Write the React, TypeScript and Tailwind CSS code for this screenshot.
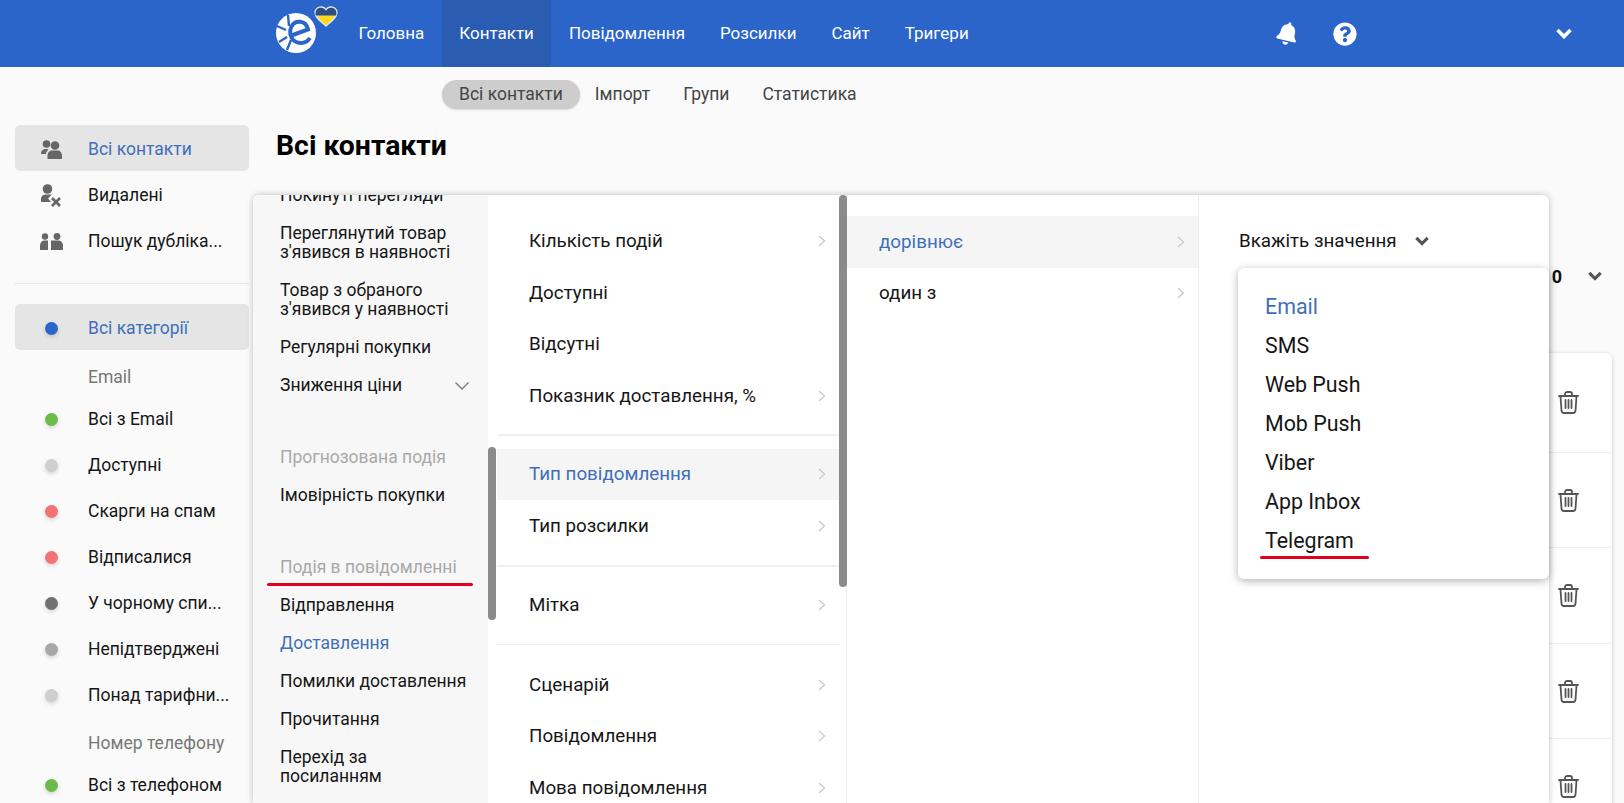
import React from "react";
import { FaBell, FaQuestionCircle } from "react-icons/fa";

const topNav = ["Головна", "Контакти", "Повідомлення", "Розсилки", "Сайт", "Тригери"];
const subNav = ["Імпорт", "Групи", "Статистика"];

const emailRows = [
  { label: "Всі з Email", dot: "bg-[#6bbb4b]" },
  { label: "Доступні", dot: "bg-[#cfcfcf]" },
  { label: "Скарги на спам", dot: "bg-[#f47174]" },
  { label: "Відписалися", dot: "bg-[#f47174]" },
  { label: "У чорному спи...", dot: "bg-[#707070]" },
  { label: "Непідтверджені", dot: "bg-[#a8a8a8]" },
  { label: "Понад тарифни...", dot: "bg-[#cfcfcf]" },
];

const channels = ["SMS", "Web Push", "Mob Push", "Viber", "App Inbox", "Telegram"];

const Logo = () => (
  <svg width="62" height="48" viewBox="0 0 62 48" className="shrink-0">
    <circle cx="20" cy="27" r="20" fill="#fff" />
    <path d="M1 20 L10 24 M3 36 L11 31 M12 9 L13 20 M11 44 L15 34" stroke="#2b65c9" strokeWidth="2.400" />
    <path d="M14 30 L32 23.500 C30 14 19 13.500 15.500 20.500 C12 28 16 37 25 37 C29 37 32 35 34 32" fill="none" stroke="#2b65c9" strokeWidth="4" />
    <path d="M50 20 C44 15 39 11 39 6.500 C39 3 42 1 45 1 C47 1 49 2 50 4 C51 2 53 1 55 1 C58 1 61 3 61 6.500 C61 11 56 15 50 20 Z" fill="#ffd91a" stroke="#dfe6f2" strokeWidth="1.400" />
    <path d="M39.700 9.500 C39.100 8.500 39.700 6.500 39.700 6.500 C39.700 3.500 42 1.700 45 1.700 C47 1.700 49 2.700 50 4.700 C51 2.700 53 1.700 55 1.700 C58 1.700 60.300 3.500 60.300 6.500 C60.300 7.500 60.500 8.500 60.300 9.500 Z" fill="#2d4f86" />
  </svg>
);

const UsersIcon = () => (
  <svg width="21" height="19" viewBox="0 0 21 19" fill="#666">
    <circle cx="5.500" cy="4" r="3.800" />
    <circle cx="14" cy="5.500" r="4.300" />
    <path d="M0 14 C0 10.500 2 9 5 9 C6 9 7 9.300 7.500 9.800 C6 11 5 12.500 5 14 Z" />
    <path d="M6.500 19 L6.500 15.500 C6.500 12.500 9 10.500 11 10.500 L17 10.500 C19 10.500 21 12.500 21 15.500 L21 19 Z" />
  </svg>
);

const UserRemovedIcon = () => (
  <svg width="21" height="23" viewBox="0 0 21 23" fill="#666">
    <circle cx="6.500" cy="5" r="4.800" />
    <path d="M0 18 L0 15 C0 12 2 10.500 5 10.500 L11 10.500 L7 14.500 L10 18 Z" />
    <path d="M11 14 L19 22 M19 14 L11 22" stroke="#666" strokeWidth="2.600" fill="none" />
  </svg>
);

const DuplicateIcon = () => (
  <svg width="23" height="17" viewBox="0 0 23 17" fill="#666">
    <circle cx="5" cy="3.500" r="3.200" />
    <circle cx="17" cy="3.500" r="3.400" />
    <path d="M0 17 L0 12.500 C0 9.500 2 7.500 4.500 7.500 L8 7.500 L8 17 Z" />
    <path d="M11 17 L11 7.500 L18.500 7.500 C21 7.500 23 9.500 23 12.500 L23 17 Z" />
  </svg>
);

const TrashIcon = () => (
  <svg width="21" height="23" viewBox="0 0 21 23" fill="none" stroke="#555" strokeWidth="1.800" strokeLinecap="round">
    <path d="M1 5 L20 5" />
    <path d="M7 4.500 L7 3 C7 1.800 8 1 9 1 L12 1 C13 1 14 1.800 14 3 L14 4.500" />
    <path d="M2.500 5.500 L3.500 19.500 C3.600 21 4.500 22 6 22 L15 22 C16.500 22 17.400 21 17.500 19.500 L18.500 5.500" />
    <path d="M7.500 9 L7.500 17 M10.500 9 L10.500 17 M13.500 9 L13.500 17" />
  </svg>
);

const BoldChevron = ({ color, size }: { color: string; size: number }) => (
  <svg width={size} height={size * 0.7} viewBox="0 0 16 11" fill="none" stroke={color} strokeWidth="3.600" className="shrink-0">
    <path d="M1.500 2 L8 8.500 L14.500 2" />
  </svg>
);

const Arrow = () => (
  <svg width="8" height="12" viewBox="0 0 8 12" fill="none" stroke="#c9c9c9" strokeWidth="1.300" className="shrink-0">
    <path d="M1 1 L6.500 6 L1 11" />
  </svg>
);

const MenuRow = ({ label, active, arrow = true }: { label: string; active?: boolean; arrow?: boolean }) => (
  <div className={`h-[51.5px] flex items-center justify-between pl-[32px] pr-[13px] ${active ? "bg-[#f5f5f5] text-[#3f6fb8]" : "text-[#161616]"}`}>
    <span>{label}</span>
    {arrow && <Arrow />}
  </div>
);

const Ev = ({ label, muted, blue }: { label: string; muted?: boolean; blue?: boolean }) => (
  <div className={`h-[38px] flex items-center pl-[27px] ${muted ? "text-[#a9a9a9]" : blue ? "text-[#3f6fb8]" : "text-[#161616]"}`}>{label}</div>
);

const Ev2 = ({ a, b }: { a: string; b: string }) => (
  <div className="h-[57px] flex flex-col justify-center pl-[27px] leading-[19px] text-[#161616]">
    <span>{a}</span>
    <span>{b}</span>
  </div>
);

const SideRow = ({ label, icon, active }: { label: string; icon: React.ReactNode; active?: boolean }) => (
  <div className={`h-[46px] pt-[2px] flex items-center rounded-[5px] ${active ? "bg-[#e5e5e5] text-[#3f6fb8]" : "text-[#161616]"}`}>
    <div className="w-[73px] flex justify-center">{icon}</div>
    <span>{label}</span>
  </div>
);

const Dot = ({ color }: { color: string }) => (
  <span className={`block w-[13px] h-[13px] rounded-full shadow-[0_2px_4px_rgba(0,0,0,0.15)] ${color}`} />
);

export default function App() {
  return (
    <div className="relative w-[1624px] h-[803px] overflow-hidden bg-[#fafafa] font-['Roboto',sans-serif] text-[17.5px]">
      <header className="h-[67px] bg-[#2b65c9] flex items-stretch pl-[276px] text-white text-[17px]">
        <div className="w-[65px] flex items-start pt-[6px]">
          <Logo />
        </div>
        {topNav.map((item) => (
          <div key={item} className={`flex items-center px-[17.5px] ${item === "Контакти" ? "bg-[#2a5cb2]" : ""}`}>
            {item}
          </div>
        ))}
        <div className="ml-[290px] flex items-center">
          <FaBell className="w-[23px] h-[23px] rotate-[14deg] text-white" />
          <FaQuestionCircle className="ml-[34px] w-[24px] h-[24px] text-white" />
          <div className="ml-[199px]">
            <BoldChevron color="#fff" size={16} />
          </div>
        </div>
      </header>

      <nav className="flex items-center pl-[442px] h-[29px] mt-[13px] text-[#444]">
        <div className="h-[29px] flex items-center px-[17px] rounded-full bg-[#cdcdcd] shadow-[0_1px_2px_rgba(0,0,0,0.15)]">Всі контакти</div>
        <div className="flex gap-[33px] ml-[15px]">
          {subNav.map((s) => (
            <span key={s}>{s}</span>
          ))}
        </div>
      </nav>

      <div className="flex mt-[16px]">
        <aside className="w-[249px] ml-[15px] shrink-0">
          <div className="w-[234px]">
            <SideRow label="Всі контакти" icon={<UsersIcon />} active />
            <SideRow label="Видалені" icon={<UserRemovedIcon />} />
            <SideRow label="Пошук дубліка..." icon={<DuplicateIcon />} />
            <div className="h-px bg-[#e4e4e4] mt-[20px] mb-[20px]" />
            <SideRow label="Всі категорії" icon={<Dot color="bg-[#2b65c9]" />} active />
            <div className="h-[37px] pt-[2px] mt-[8px] flex items-center pl-[73px] text-[#777]">Email</div>
            {emailRows.map((r) => (
              <SideRow key={r.label} label={r.label} icon={<Dot color={r.dot} />} />
            ))}
            <div className="h-[38px] pt-[2px] mt-[6px] flex items-center pl-[73px] text-[#777]">Номер телефону</div>
            <SideRow label="Всі з телефоном" icon={<Dot color="bg-[#6bbb4b]" />} />
          </div>
        </aside>

        <main className="flex-1 pl-[12px] pr-[12px]">
          <h1 className="h-[42px] flex items-center text-[28.4px] font-bold text-black">Всі контакти</h1>
          <div className="h-[22px] mt-[98px] flex items-center justify-end gap-[26px] pr-[10px] font-bold text-[18px] text-[#111]">
            <span>0</span>
            <BoldChevron color="#555" size={14} />
          </div>
          <div className="mt-[66px] bg-white rounded-md shadow-[0_1px_4px_rgba(0,0,0,0.2)]">
            {[100, 95, 96, 95, 96].map((h, i) => (
              <div key={i} style={{ height: h }} className="flex items-center justify-end pr-[33px] border-b border-[#eeeeee]">
                <TrashIcon />
              </div>
            ))}
          </div>
        </main>
      </div>

      <div className="absolute left-[253px] top-[195px] w-[1296px] bottom-0 flex bg-white rounded-t-md shadow-[0_0_6px_rgba(0,0,0,0.25)]">
        <div className="w-[235px] shrink-0 bg-[#f7f7f7] overflow-hidden rounded-tl-md">
          <div className="-mt-[19px]">
            <Ev label="Покинуті перегляди" />
            <Ev2 a="Переглянутий товар" b="з'явився в наявності" />
            <Ev2 a="Товар з обраного" b="з'явився у наявності" />
            <Ev label="Регулярні покупки" />
            <div className="relative">
              <Ev label="Зниження ціни" />
              <svg width="16" height="10" viewBox="0 0 16 10" fill="none" stroke="#777" strokeWidth="1.300" className="absolute right-[18px] top-[15px]">
                <path d="M1.500 1.500 L8 8 L14.500 1.500" />
              </svg>
            </div>
            <div className="mt-[34px]">
              <Ev label="Прогнозована подія" muted />
            </div>
            <Ev label="Імовірність покупки" />
            <div className="relative mt-[34px]">
              <Ev label="Подія в повідомленні" muted />
              <div className="absolute left-[14px] top-[35px] w-[206px] h-[3px] rounded-full bg-[#e3001b]" />
            </div>
            <Ev label="Відправлення" />
            <Ev label="Доставлення" blue />
            <Ev label="Помилки доставлення" />
            <Ev label="Прочитання" />
            <Ev2 a="Перехід за" b="посиланням" />
          </div>
        </div>

        <div className="w-[9px] shrink-0 bg-white">
          <div className="mt-[252px] h-[173px] w-[8px] rounded-[4px] bg-[#8a8a8a]" />
        </div>

        <div className="w-[342px] shrink-0 pt-[20.5px] text-[18.8px]">
          <MenuRow label="Кількість подій" />
          <MenuRow label="Доступні" arrow={false} />
          <MenuRow label="Відсутні" arrow={false} />
          <MenuRow label="Показник доставлення, %" />
          <div className="h-[2px] bg-[#efefef] mt-[12px] mb-[13px]" />
          <MenuRow label="Тип повідомлення" active />
          <MenuRow label="Тип розсилки" />
          <div className="h-[2px] bg-[#efefef] mt-[13px] mb-[13px]" />
          <MenuRow label="Мітка" />
          <div className="h-px bg-[#efefef] mt-[13px] mb-[14px]" />
          <MenuRow label="Сценарій" />
          <MenuRow label="Повідомлення" />
          <MenuRow label="Мова повідомлення" />
        </div>

        <div className="w-[8px] shrink-0 border-r border-[#eeeeee]">
          <div className="h-[392px] w-[8px] rounded-[4px] bg-[#8a8a8a]" />
        </div>

        <div className="w-[352px] shrink-0 pt-[21px] border-r border-[#eeeeee] text-[18.8px]">
          <MenuRow label="дорівнює" active />
          <MenuRow label="один з" />
        </div>

        <div className="relative flex-1">
          <div className="h-[24px] mt-[34px] pl-[40px] flex items-center text-[18.8px] text-[#161616]">
            <span>Вкажіть значення</span>
            <div className="ml-[18px]">
              <BoldChevron color="#555" size={14} />
            </div>
          </div>
          <div className="absolute left-[39px] top-[73px] w-[311px] h-[311px] pt-[20px] pl-[27px] bg-white rounded-md shadow-[0_2px_8px_rgba(0,0,0,0.3)] text-[21.4px] text-[#161616]">
            <div className="h-[39px] flex items-center text-[#3f6fb8]">Email</div>
            {channels.map((c) => (
              <div key={c} className="h-[39px] flex items-center">{c}</div>
            ))}
            <div className="absolute left-[22px] top-[288px] w-[109px] h-[3px] rounded-full bg-[#e3001b]" />
          </div>
        </div>
      </div>
    </div>
  );
}
